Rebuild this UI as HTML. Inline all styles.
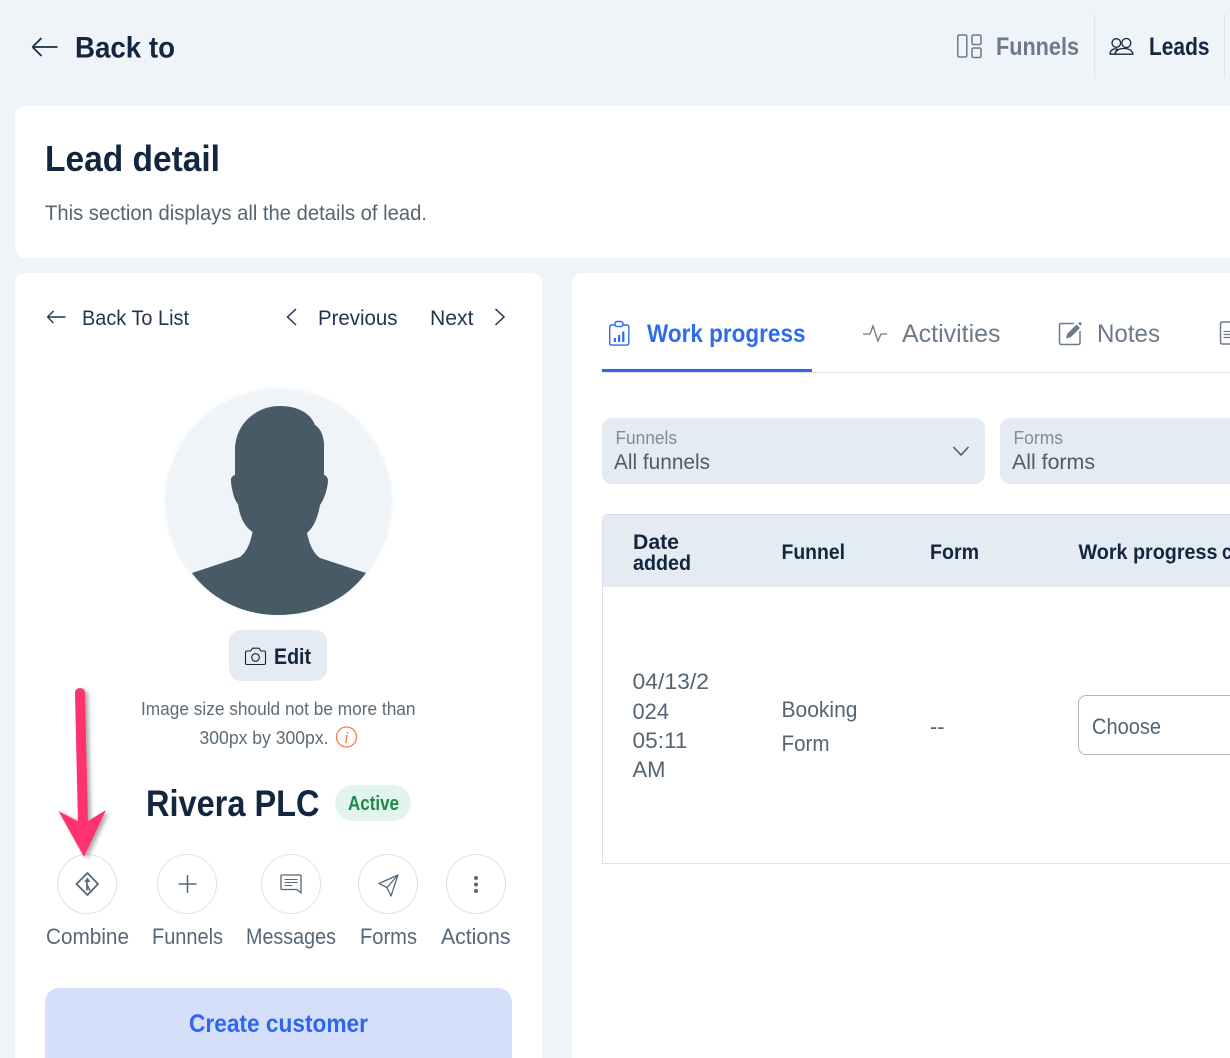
<!DOCTYPE html>
<html lang="en"><head><meta charset="utf-8"><title>Lead detail</title>
<style>
html,body{margin:0;padding:0;width:1230px;height:1058px;overflow:hidden;background:#eff4f9}
svg{display:block}
text{font-family:"Liberation Sans",sans-serif;white-space:pre}
.b{font-weight:700}
</style></head><body>
<svg width="1230" height="1058" viewBox="0 0 1230 1058" xmlns="http://www.w3.org/2000/svg">
<defs>
<filter id="sh" x="-50%" y="-20%" width="200%" height="140%"><feDropShadow dx="3" dy="2" stdDeviation="2" flood-color="#000" flood-opacity=".35"/></filter>
<filter id="blur" x="-10%" y="-10%" width="120%" height="120%"><feGaussianBlur stdDeviation="1.500"/></filter>
</defs>
<rect width="1230" height="1058" fill="#eff4f9"/>
<!-- header -->
<path d="M57.500 47H32.500M32.500 47l9-9M32.500 47l9 9" fill="none" stroke="#1b2d47" stroke-width="1.800"/>
<text class="b" x="75" y="57.500" font-size="30" fill="#12263f" textLength="100" lengthAdjust="spacingAndGlyphs">Back to</text>
<g fill="none" stroke="#6c7a89" stroke-width="1.500"><rect x="957.800" y="35" width="9" height="22" rx="1.500"/><rect x="972" y="35" width="9" height="9.500" rx="1.500"/><rect x="972" y="48" width="9" height="9.500" rx="1.500"/></g>
<text class="b" x="996" y="55" font-size="25" fill="#6c7a89" textLength="83" lengthAdjust="spacingAndGlyphs">Funnels</text>
<rect x="1094" y="14" width="1" height="64" fill="#dfe3e8"/>
<g fill="none" stroke="#12263f" stroke-width="1.300"><circle cx="1116.300" cy="43" r="4.300"/><circle cx="1126.300" cy="43" r="4.500"/><path d="M1110 54.200c.2-3 2-5 5-5.400l3 .6c-2 1-3 2.800-3 4.800zM1115 54.200c.3-3.500 4-5.700 9-5.700s8.500 2.200 9 5.700z" stroke-linejoin="round"/></g>
<text class="b" x="1149" y="55" font-size="25" fill="#12263f" textLength="60.500" lengthAdjust="spacingAndGlyphs">Leads</text>
<rect x="1224" y="14" width="1" height="64" fill="#dfe3e8"/>
<!-- top card -->
<rect x="15" y="106" width="1240" height="152" rx="10" fill="#fff"/>
<text class="b" x="45" y="171" font-size="36" fill="#12263f" textLength="175" lengthAdjust="spacingAndGlyphs">Lead detail</text>
<text x="45" y="220" font-size="21" fill="#55646f" textLength="382" lengthAdjust="spacingAndGlyphs">This section displays all the details of lead.</text>
<!-- left card -->
<rect x="15" y="273" width="527" height="800" rx="10" fill="#fff"/>
<path d="M65.500 317H47.500M47.500 317l6-6M47.500 317l6 6" fill="none" stroke="#1f3550" stroke-width="1.400"/>
<text x="82" y="325" font-size="21" fill="#1f3550" textLength="107" lengthAdjust="spacingAndGlyphs">Back To List</text>
<path d="M296 309l-8.500 8 8.500 8" fill="none" stroke="#1f3550" stroke-width="1.500"/>
<text x="318" y="325" font-size="21" fill="#1f3550" textLength="79.500" lengthAdjust="spacingAndGlyphs">Previous</text>
<text x="430" y="325" font-size="21" fill="#1f3550" textLength="43.500" lengthAdjust="spacingAndGlyphs">Next</text>
<path d="M495.500 309l8.500 8-8.500 8" fill="none" stroke="#1f3550" stroke-width="1.500"/>
<!-- avatar -->
<circle cx="278.500" cy="502" r="113.500" fill="#eff2f5" filter="url(#blur)"/>
<circle cx="278.500" cy="502" r="112.500" fill="#eff4f8"/>
<path d="M280 406C256 406 235 424 235 450V475C232 476 230.500 478 231 482C232 490 234 500 238 504C240 518 245 527 252.500 532C251 540 248 551 240 557L192 573C212 600 244 615 278 615C314 615 346 600 366 573L320 558C312 552 309 542 307 533C314 527 318 517 320 505C324 500 327 490 328 482C328 478 327 476 324 475V443C323 434 320 428 315 425C310 412 296 406 280 406Z" fill="#475a66"/>
<!-- edit -->
<rect x="229" y="630" width="98" height="51" rx="12" fill="#e5ebf2"/>
<g fill="none" stroke="#12263f" stroke-width="1.100"><path d="M247 651h3.500l2-2.800h6.500l2 2.800h3c1 0 1.500.6 1.500 1.500v10.500c0 .9-.5 1.500-1.500 1.500H247c-1 0-1.500-.6-1.500-1.500v-10.500c0-.9.500-1.500 1.500-1.500z"/><circle cx="255.500" cy="657.500" r="3.800"/></g>
<text class="b" x="274" y="664" font-size="22" fill="#12263f" textLength="37" lengthAdjust="spacingAndGlyphs">Edit</text>
<text x="141" y="715" font-size="18.500" fill="#5c6b78" textLength="274.500" lengthAdjust="spacingAndGlyphs">Image size should not be more than</text>
<text x="199.500" y="744" font-size="18.500" fill="#5c6b78" textLength="129" lengthAdjust="spacingAndGlyphs">300px by 300px.</text>
<circle cx="346.500" cy="737" r="10" fill="none" stroke="#f47c50" stroke-width="1.300"/>
<text x="346.500" y="743" font-size="17" font-style="italic" fill="#f47c50" text-anchor="middle" style="font-family:'Liberation Serif',serif">i</text>
<text class="b" x="146" y="816" font-size="37" fill="#12263f" textLength="173.500" lengthAdjust="spacingAndGlyphs">Rivera PLC</text>
<rect x="335" y="785" width="76" height="36" rx="18" fill="#e1f5ee"/>
<text class="b" x="348" y="810" font-size="20" fill="#1d8a45" textLength="51" lengthAdjust="spacingAndGlyphs">Active</text>
<!-- actions -->
<g fill="#fff" stroke="#dfe2e8" stroke-width="1"><circle cx="87" cy="884" r="29.500"/><circle cx="187" cy="884" r="29.500"/><circle cx="291" cy="884" r="29.500"/><circle cx="388" cy="884" r="29.500"/><circle cx="476" cy="884" r="29.500"/></g>
<g fill="none" stroke="#55687a">
<path d="M87.500 873l10.500 11-10.500 11-11-11z" stroke-width="1.800" stroke-linejoin="round"/>
<path d="M87.500 877.500l-3.500 4.500h6.500z" fill="#55687a" stroke="none"/>
<path d="M87 881v9.500M87 885l3 5.500" stroke-width="1.700"/>
<path d="M187.500 875v18M178.500 884h18" stroke-width="1.500"/>
<path d="M282 875h18c.6 0 1 .4 1 1v17l-4-3.500h-15c-.6 0-1-.4-1-1v-12.500c0-.6.400-1 1-1z" stroke-width="1.300"/>
<path d="M284.500 879.500h13M284.500 882.500h13M284.500 885.500h8" stroke-width="1.100"/>
<path d="M398 875l-19 8.500 8 4 4 8.500zM398 875l-11 12.500" stroke-width="1.300" stroke-linejoin="round"/>
</g>
<g fill="#55687a"><circle cx="476" cy="878" r="2"/><circle cx="476" cy="884.500" r="2"/><circle cx="476" cy="891" r="2"/></g>
<g font-size="22" fill="#55687a">
<text x="46" y="944" textLength="83" lengthAdjust="spacingAndGlyphs">Combine</text>
<text x="152" y="944" textLength="71" lengthAdjust="spacingAndGlyphs">Funnels</text>
<text x="246" y="944" textLength="90" lengthAdjust="spacingAndGlyphs">Messages</text>
<text x="360" y="944" textLength="57" lengthAdjust="spacingAndGlyphs">Forms</text>
<text x="441" y="944" textLength="69.500" lengthAdjust="spacingAndGlyphs">Actions</text>
</g>
<rect x="45" y="988" width="467" height="84" rx="14" fill="#d5dffa"/>
<text class="b" x="189" y="1032" font-size="25" fill="#2f66ee" textLength="179" lengthAdjust="spacingAndGlyphs">Create customer</text>
<!-- arrow -->
<g filter="url(#sh)" fill="#ff3370"><path d="M75 693c0-6.500 10-6.500 10 0L88 825 78 825z"/><path d="M58.500 811L83 824 106 810 84 857z"/></g>
<!-- right card -->
<rect x="572" y="273" width="700" height="800" rx="10" fill="#fff"/>
<g fill="none" stroke="#2f6bea" stroke-width="1.400"><path d="M615 325h-3.500c-1 0-1.800.8-1.800 1.800v16.500c0 1 .8 1.800 1.800 1.800h15.500c1 0 1.800-.8 1.800-1.800v-16.500c0-1-.8-1.800-1.800-1.800h-3.500"/><rect x="615" y="321.500" width="8" height="5" rx="2"/></g>
<g fill="#2f6bea"><rect x="613.800" y="338" width="2.200" height="4"/><rect x="618" y="335" width="2.200" height="7"/><rect x="622.200" y="331.500" width="2.200" height="10.500"/></g>
<text class="b" x="647" y="342" font-size="25" fill="#2f6bea" textLength="158.500" lengthAdjust="spacingAndGlyphs">Work progress</text>
<path d="M863 334h7l3-8 5 15 3-7h6" fill="none" stroke="#6c7a89" stroke-width="1.300"/>
<text x="902" y="342" font-size="25" fill="#6c7a89" textLength="98.500" lengthAdjust="spacingAndGlyphs">Activities</text>
<path d="M1074 323.500h-12.500c-1.200 0-2 .8-2 2v17c0 1.200.8 2 2 2h16.500c1.200 0 2-.8 2-2V331" fill="none" stroke="#6c7a89" stroke-width="1.500"/>
<path d="M1066 338.500l1.200-4.700 9.300-9.300 3.500 3.500-9.300 9.300zM1078 323.500l2-1.800 2 2-1.700 2z" fill="#6c7a89"/>
<text x="1097" y="342" font-size="25" fill="#6c7a89" textLength="63" lengthAdjust="spacingAndGlyphs">Notes</text>
<path d="M1231 322h-8.500c-1.200 0-2 .8-2 2v18c0 1.200.8 2 2 2h8.500" fill="none" stroke="#6c7a89" stroke-width="1.500"/>
<path d="M1223.500 331.500h7M1223.500 334.500h7M1223.500 337.500h7" stroke="#6c7a89" stroke-width="1.200"/>
<rect x="602" y="372" width="628" height="1" fill="#e2e5ea"/>
<rect x="602" y="369" width="210" height="3" fill="#2f66e6"/>
<!-- selects -->
<rect x="602" y="418" width="383" height="66" rx="10" fill="#e5ebf2"/>
<rect x="1000" y="418" width="300" height="66" rx="10" fill="#e5ebf2"/>
<text x="615.500" y="444" font-size="18" fill="#7f8c99" textLength="61.500" lengthAdjust="spacingAndGlyphs">Funnels</text>
<text x="614" y="469" font-size="21" fill="#4c5c6a" textLength="96" lengthAdjust="spacingAndGlyphs">All funnels</text>
<path d="M953.500 447l7.500 8 7.500-8" fill="none" stroke="#4c5c6a" stroke-width="1.600"/>
<text x="1013.500" y="444" font-size="18" fill="#7f8c99" textLength="49.500" lengthAdjust="spacingAndGlyphs">Forms</text>
<text x="1012" y="469" font-size="21" fill="#4c5c6a" textLength="83" lengthAdjust="spacingAndGlyphs">All forms</text>
<!-- table -->
<path d="M1240 514.500H608c-3 0-5.500 2.500-5.500 5.500V863.500H1240" fill="#fff" stroke="#dcdfe4"/>
<path d="M603 587V520c0-3 2-5 5-5H1230V587z" fill="#e5ebf2"/>
<g class="b" font-size="21" fill="#12263f" font-weight="700">
<text x="633" y="549" textLength="46" lengthAdjust="spacingAndGlyphs">Date</text>
<text x="633" y="570" textLength="58" lengthAdjust="spacingAndGlyphs">added</text>
<text x="781.500" y="559" textLength="63.500" lengthAdjust="spacingAndGlyphs">Funnel</text>
<text x="930" y="559" textLength="49" lengthAdjust="spacingAndGlyphs">Form</text>
<text x="1078.500" y="559" textLength="139" lengthAdjust="spacingAndGlyphs">Work progress</text>
<text x="1222" y="559" textLength="10" lengthAdjust="spacingAndGlyphs">c</text>
</g>
<g font-size="22" fill="#556472">
<text x="632.500" y="689" textLength="76.500" lengthAdjust="spacingAndGlyphs">04/13/2</text>
<text x="632.500" y="719" textLength="36.500" lengthAdjust="spacingAndGlyphs">024</text>
<text x="632.500" y="748" textLength="55" lengthAdjust="spacingAndGlyphs">05:11</text>
<text x="632.500" y="777" textLength="33" lengthAdjust="spacingAndGlyphs">AM</text>
<text x="781.500" y="717" textLength="76" lengthAdjust="spacingAndGlyphs">Booking</text>
<text x="781.500" y="751" textLength="48" lengthAdjust="spacingAndGlyphs">Form</text>
<text x="930" y="734" textLength="14.500" lengthAdjust="spacingAndGlyphs">--</text>
<text x="1092" y="734" textLength="69" lengthAdjust="spacingAndGlyphs">Choose</text>
</g>
<path d="M1240 695.500H1086c-4 0-7.500 3.500-7.500 7.500v44c0 4 3.500 7.500 7.500 7.500H1240" fill="none" stroke="#b0b8c0"/>
</svg>
</body></html>
